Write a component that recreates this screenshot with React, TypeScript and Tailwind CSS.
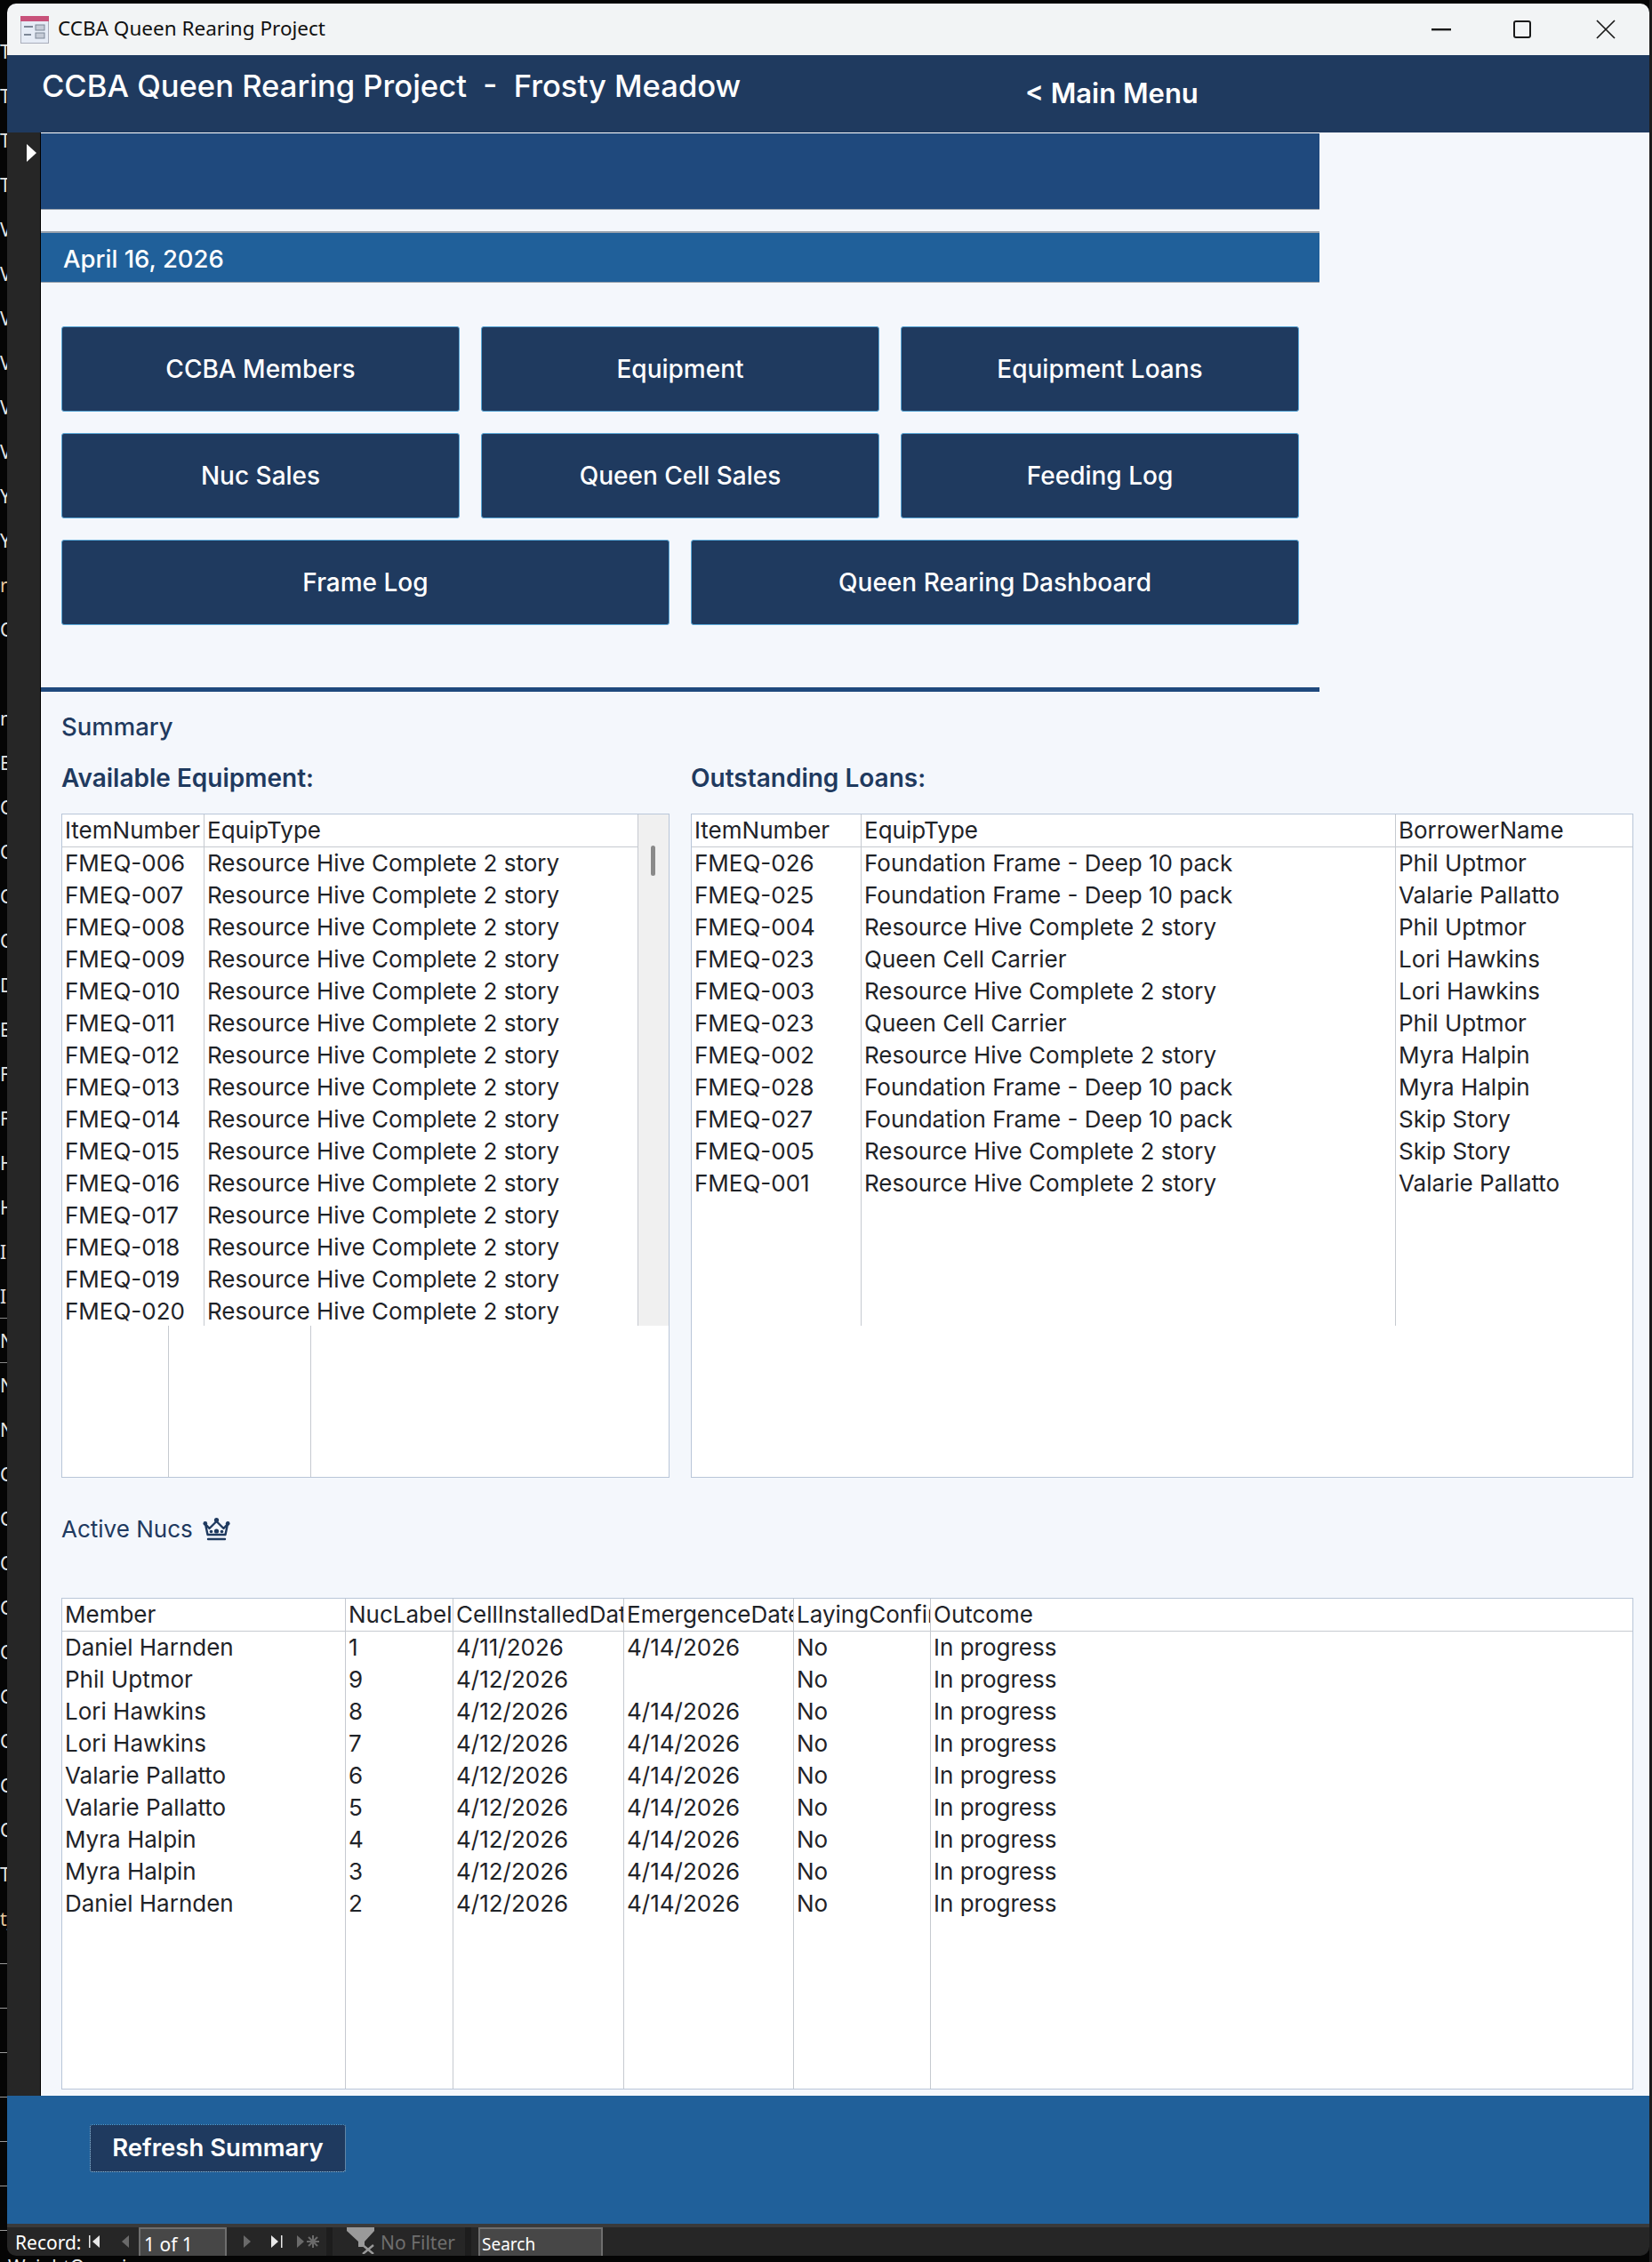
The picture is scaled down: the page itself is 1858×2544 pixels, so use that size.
const strip: [string, string][] = [
  ['T', ''], ['T', ''], ['T', ''], ['T', ''],
  ['V', ''], ['V', ''], ['V', ''], ['V', ''], ['V', ''], ['V', ''],
  ['Y', ''], ['Y', ''], ['r', 'text-[#e8c9a0]'], ['C', ''], ['', ''], ['n', ''], ['E', ''],
  ['C', ''], ['C', ''], ['C', ''], ['C', ''], ['D', ''], ['E', ''], ['F', ''], ['F', ''],
  ['H', ''], ['H', ''], ['I', ''], ['I', 'border-b border-[#888]'], ['N', 'border-b border-[#888]'], ['N', ''], ['N', ''],
  ['C', ''], ['C', ''], ['C', ''], ['C', ''], ['C', ''], ['C', ''], ['C', ''], ['C', ''], ['C', ''],
  ['T', ''], ['ty', 'text-[#e8c9a0]'],
];

const buttons = ['CCBA Members', 'Equipment', 'Equipment Loans', 'Nuc Sales', 'Queen Cell Sales', 'Feeding Log'];

const available = ['006', '007', '008', '009', '010', '011', '012', '013', '014', '015', '016', '017', '018', '019', '020'];

const loans = [
  ['FMEQ-026', 'Foundation Frame - Deep 10 pack', 'Phil Uptmor'],
  ['FMEQ-025', 'Foundation Frame - Deep 10 pack', 'Valarie Pallatto'],
  ['FMEQ-004', 'Resource Hive Complete 2 story', 'Phil Uptmor'],
  ['FMEQ-023', 'Queen Cell Carrier', 'Lori Hawkins'],
  ['FMEQ-003', 'Resource Hive Complete 2 story', 'Lori Hawkins'],
  ['FMEQ-023', 'Queen Cell Carrier', 'Phil Uptmor'],
  ['FMEQ-002', 'Resource Hive Complete 2 story', 'Myra Halpin'],
  ['FMEQ-028', 'Foundation Frame - Deep 10 pack', 'Myra Halpin'],
  ['FMEQ-027', 'Foundation Frame - Deep 10 pack', 'Skip Story'],
  ['FMEQ-005', 'Resource Hive Complete 2 story', 'Skip Story'],
  ['FMEQ-001', 'Resource Hive Complete 2 story', 'Valarie Pallatto'],
];

const nucs = [
  ['Daniel Harnden', '1', '4/11/2026', '4/14/2026'],
  ['Phil Uptmor', '9', '4/12/2026', ''],
  ['Lori Hawkins', '8', '4/12/2026', '4/14/2026'],
  ['Lori Hawkins', '7', '4/12/2026', '4/14/2026'],
  ['Valarie Pallatto', '6', '4/12/2026', '4/14/2026'],
  ['Valarie Pallatto', '5', '4/12/2026', '4/14/2026'],
  ['Myra Halpin', '4', '4/12/2026', '4/14/2026'],
  ['Myra Halpin', '3', '4/12/2026', '4/14/2026'],
  ['Daniel Harnden', '2', '4/12/2026', '4/14/2026'],
];

function Col({ width, header, cells }: { width: string; header: string; cells: string[] }) {
  return (
    <div className={`${width} shrink-0 border-r border-[#c6cad0] last:border-r-0 overflow-hidden`}>
      <div className="h-[37px] border-b border-[#c6cad0] pl-[3px] text-[26px] leading-[36px] whitespace-nowrap overflow-hidden">{header}</div>
      {cells.map((c, i) => (
        <div key={i} className="h-[36px] pl-[3px] text-[26px] leading-[36px] whitespace-nowrap overflow-hidden">{c}</div>
      ))}
    </div>
  );
}

function FormIcon() {
  return (
    <svg width="32" height="31" viewBox="0 0 32 31">
      <rect x="0.5" y="0.5" width="31" height="30" fill="#e6ecf6" stroke="#a9aebb" />
      <rect x="0" y="0" width="32" height="6" fill="#c8527a" />
      <rect x="4" y="11" width="10" height="2" fill="#7d8797" />
      <rect x="4" y="20" width="8" height="2" fill="#7d8797" />
      <rect x="17" y="10" width="10" height="6" fill="#c5cbd6" stroke="#7d8797" />
      <rect x="17" y="19" width="10" height="6" fill="#c5cbd6" stroke="#7d8797" />
    </svg>
  );
}

function WindowButtons() {
  return (
    <div className="flex items-center">
      <svg width="22" height="3" viewBox="0 0 22 3" className="mr-[70px]"><rect width="22" height="2.4" fill="#1a1a1a" /></svg>
      <div className="mr-[73px] h-[20px] w-[20px] rounded-[3px] border-2 border-[#1a1a1a]" />
      <svg width="22" height="22" viewBox="0 0 22 22" className="mr-[38px]">
        <path d="M1 1 L21 21 M21 1 L1 21" stroke="#1a1a1a" strokeWidth="1.7" />
      </svg>
    </div>
  );
}

function Crown() {
  return (
    <svg width="31" height="26" viewBox="0 0 31 26" className="ml-[11px]">
      <g fill="none" stroke="#1f3a5f" strokeWidth="2.4" strokeLinejoin="round" strokeLinecap="round">
        <path d="M3 7 L7.5 12 L15.5 4 L23.5 12 L28 7 L25.5 19 H5.5 Z" />
        <path d="M6 24 H25" />
      </g>
      <g fill="#1f3a5f">
        <circle cx="2.8" cy="6.4" r="2.4" />
        <circle cx="15.5" cy="2.6" r="2.6" />
        <circle cx="28.2" cy="6.4" r="2.4" />
        <circle cx="15.5" cy="15" r="2.6" />
        <circle cx="9.5" cy="15.5" r="1.8" />
        <circle cx="21.5" cy="15.5" r="1.8" />
      </g>
    </svg>
  );
}

function NavIcon({ kind, fill }: { kind: 'first' | 'prev' | 'next' | 'last' | 'new'; fill: string }) {
  if (kind === 'first') {
    return (
      <svg width="13" height="16" viewBox="0 0 13 16"><rect x="0" y="1" width="1.5" height="14" fill={fill} /><path d="M12 1 V15 L4 8 Z" fill={fill} /></svg>
    );
  }
  if (kind === 'prev') {
    return <svg width="8" height="16" viewBox="0 0 8 16"><path d="M8 1 V15 L0 8 Z" fill={fill} /></svg>;
  }
  if (kind === 'next') {
    return <svg width="8" height="16" viewBox="0 0 8 16"><path d="M0 1 V15 L8 8 Z" fill={fill} /></svg>;
  }
  if (kind === 'last') {
    return (
      <svg width="13" height="16" viewBox="0 0 13 16"><path d="M0 1 V15 L8 8 Z" fill={fill} /><rect x="11" y="1" width="1.5" height="14" fill={fill} /></svg>
    );
  }
  return (
    <svg width="26" height="16" viewBox="0 0 26 16">
      <path d="M0 1 V15 L8 8 Z" fill={fill} />
      <path d="M18 1 V15 M11 8 H25 M13 3 L23 13 M23 3 L13 13" stroke={fill} strokeWidth="2" />
    </svg>
  );
}

function FilterIcon() {
  return (
    <svg width="32" height="30" viewBox="0 0 32 30" className="shrink-0">
      <path d="M0 0 H31 V4 L20 16 V22 H13 V16 L0 4 Z" fill="#9a9a9a" />
      <path d="M18 20 L30 30 M30 20 L18 30" stroke="#9a9a9a" strokeWidth="2.4" />
    </svg>
  );
}

export default function App() {
  return (
    <div className="flex h-[2544px] w-[1858px] overflow-hidden bg-[#050505] font-['Inter',sans-serif] text-[#1f2328]">
      {/* desktop text showing behind the window */}
      <div className="w-[8px] shrink-0 overflow-hidden pt-[33px] font-['Noto_Sans',sans-serif] text-[21px] leading-[50px] text-[#e4e4e4]">
        {strip.map(([t, extra], i) => (
          <div key={i} className={`h-[50px] ${extra}`}>{t}</div>
        ))}
        {[0, 1, 2, 3, 4, 5, 6].map(i => (
          <div key={i} className="flex h-[50px] items-center"><div className="h-px w-full bg-[#999]" /></div>
        ))}
      </div>

      <div className="flex w-[1847px] shrink-0 flex-col">
        <div className="h-[4px] shrink-0" />
        <div className="flex h-[2533px] shrink-0 flex-col overflow-hidden rounded-[10px]">
          {/* title bar */}
          <div className="flex h-[58px] shrink-0 items-center justify-between bg-[#f2f4f5] pl-[15px]">
            <div className="flex items-center gap-[10px]">
              <FormIcon />
              <span className="-mt-[3px] font-['Noto_Sans',sans-serif] text-[22.5px] text-[#111]">CCBA Queen Rearing Project</span>
            </div>
            <WindowButtons />
          </div>

          {/* form header */}
          <div className="relative flex h-[87px] shrink-0 bg-[#1f3a5f] text-white">
            <div className="w-[1145px] pl-[39px] pt-[10px] text-[34.6px] font-medium leading-[48px] whitespace-pre">CCBA Queen Rearing Project  -  Frosty Meadow</div>
            <div className="pt-[23px] text-[31px] font-semibold leading-[40px]">&lt; Main Menu</div>
          </div>

          <div className="flex h-[2208px] shrink-0">
            <div className="w-[38px] shrink-0 border-r border-black bg-[#262626] pl-[22px] pt-[13px]">
              <svg width="11" height="20" viewBox="0 0 11 20"><path d="M0 0 L11 10 L0 20 Z" fill="#fff" /></svg>
            </div>

            <div className="flex-1 bg-[#f4f7fc]">
              <div className="h-[87px] w-[1438px] border-y border-t-white border-b-[#9aa3ad] bg-[#1f497d]" />
              <div className="mt-[24px] flex h-[58px] w-[1438px] items-center border-t-2 border-b border-t-[#9aa3ad] border-b-[#9aa3ad] bg-[#20609a] pb-0 pl-[25px] pt-[5px] text-[27.5px] font-medium text-white">
                April 16, 2026
              </div>

              <div className="ml-[23px] mt-[49px] w-[1392px]">
                <div className="grid grid-cols-3 gap-x-[24px] gap-y-[24px]">
                  {buttons.map(b => (
                    <div key={b} className="flex h-[96px] items-center justify-center rounded-[3px] border border-[#5aa7d6] bg-[#1f3a5f] text-[28px] font-medium text-white">{b}</div>
                  ))}
                </div>
                <div className="mt-[24px] flex gap-[24px]">
                  <div className="flex h-[96px] w-[684px] items-center justify-center rounded-[3px] border border-[#5aa7d6] bg-[#1f3a5f] text-[28px] font-medium text-white">Frame Log</div>
                  <div className="flex h-[96px] w-[684px] items-center justify-center rounded-[3px] border border-[#5aa7d6] bg-[#1f3a5f] text-[28px] font-medium text-white">Queen Rearing Dashboard</div>
                </div>
              </div>

              <div className="mt-[70px] h-[5px] w-[1438px] bg-[#1f497d]" />

              <div className="ml-[23px] mt-[24px] text-[27.5px] font-medium leading-[30px] text-[#1f3a5f]">Summary</div>

              <div className="ml-[23px] mt-[28px] flex text-[28px] font-semibold leading-[30px] text-[#1f3a5f]">
                <div className="w-[708px]">Available Equipment:</div>
                <div>Outstanding Loans:</div>
              </div>

              <div className="ml-[23px] mt-[25px] flex gap-[24px]">
                <div className="flex h-[747px] w-[684px] flex-col border border-[#b9c6d8] bg-white">
                  <div className="flex h-[575px] shrink-0">
                    <Col width="w-[160px]" header="ItemNumber" cells={available.map(n => `FMEQ-${n}`)} />
                    <Col width="w-[488px]" header="EquipType" cells={available.map(() => 'Resource Hive Complete 2 story')} />
                    <div className="flex-1 bg-[#f0f0f0] pl-[14px] pt-[35px]">
                      <div className="h-[34px] w-[5px] rounded-full bg-[#8a8a8a]" />
                    </div>
                  </div>
                  <div className="flex flex-1">
                    <div className="w-[120px] border-r border-[#c6cad0]" />
                    <div className="w-[160px] border-r border-[#c6cad0]" />
                  </div>
                </div>

                <div className="h-[747px] w-[1060px] border border-[#b9c6d8] bg-white">
                  <div className="flex h-[575px]">
                    <Col width="w-[191px]" header="ItemNumber" cells={loans.map(r => r[0])} />
                    <Col width="w-[601px]" header="EquipType" cells={loans.map(r => r[1])} />
                    <Col width="w-[266px]" header="BorrowerName" cells={loans.map(r => r[2])} />
                  </div>
                </div>
              </div>

              <div className="ml-[23px] mt-[43px] flex h-[30px] items-center text-[26px] leading-[30px] text-[#1f3a5f]">
                Active Nucs
                <Crown />
              </div>

              <div className="ml-[23px] mt-[62px] flex h-[553px] w-[1768px] border border-[#b9c6d8] bg-white">
                <Col width="w-[319px]" header="Member" cells={nucs.map(r => r[0])} />
                <Col width="w-[121px]" header="NucLabel" cells={nucs.map(r => r[1])} />
                <Col width="w-[192px]" header="CellInstalledDate" cells={nucs.map(r => r[2])} />
                <Col width="w-[191px]" header="EmergenceDate" cells={nucs.map(r => r[3])} />
                <Col width="w-[154px]" header="LayingConfirmed" cells={nucs.map(() => 'No')} />
                <Col width="w-[789px]" header="Outcome" cells={nucs.map(() => 'In progress')} />
              </div>
            </div>
          </div>

          {/* form footer */}
          <div className="h-[144px] shrink-0 bg-[#20609a] pl-[93px] pt-[32px]">
            <div className="flex h-[54px] w-[288px] items-center justify-center rounded-[3px] border border-dotted border-[#9fd0ee] border-t-[#4fa8e0] bg-[#1f3a5f] text-[27.5px] font-semibold text-white">Refresh Summary</div>
          </div>

          {/* record navigation */}
          <div className="flex h-[36px] shrink-0 items-stretch border-t-[4px] border-[#3a3a3a] bg-[#262626] pl-[9px] font-['Noto_Sans',sans-serif] text-[21px] leading-[34px]">
            <span className="w-[83px] text-white">Record:</span>
            <div className="flex items-center"><NavIcon kind="first" fill="#e8e8e8" /></div>
            <div className="ml-[24px] flex items-center"><NavIcon kind="prev" fill="#6a6a6a" /></div>
            <div className="ml-[11px] w-[99px] border-x-2 border-t-2 border-[#6e6e6e] bg-[#474747] pl-[4px] text-white">1 of 1</div>
            <div className="ml-[19px] flex items-center"><NavIcon kind="next" fill="#6a6a6a" /></div>
            <div className="ml-[23px] flex items-center"><NavIcon kind="last" fill="#e8e8e8" /></div>
            <div className="ml-[16px] flex items-center"><NavIcon kind="new" fill="#6a6a6a" /></div>
            <div className="ml-[7px] w-[7px] bg-[#1d1d1d]" />
            <div className="flex w-[149px] items-start gap-[6px] pl-[16px]">
              <FilterIcon />
              <span className="text-[#6e6e6e]">No Filter</span>
            </div>
            <div className="w-[7px] bg-[#1d1d1d]" />
            <div className="ml-[8px] w-[140px] border-x-2 border-t-2 border-[#6e6e6e] bg-[#474747] pl-[2px] text-[19px] text-white">Search</div>
          </div>
        </div>
        <div className="h-[7px] overflow-hidden whitespace-nowrap pl-[1px] font-['Noto_Sans',sans-serif] text-[21px] leading-[24px] text-[#e8e8e8]">WeightOverview</div>
      </div>
      <div className="w-[3px] shrink-0 bg-[#1c1c1c]" />
    </div>
  );
}
